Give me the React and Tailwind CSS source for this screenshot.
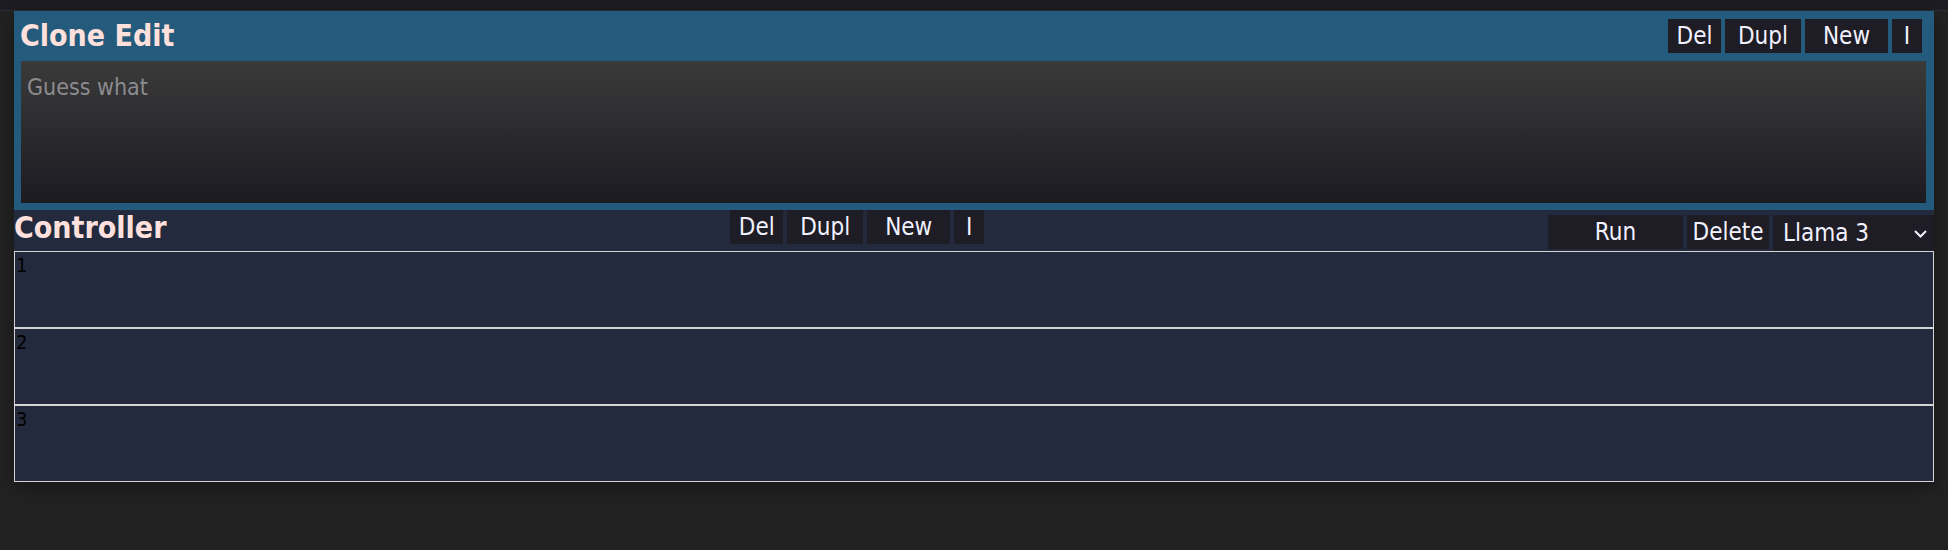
import React from 'react';

const font = { fontFamily: '"DejaVu Sans Condensed", "Liberation Sans", sans-serif' };

function ToolButton({ label, width }) {
  return (
    <button
      type="button"
      className={`${width} h-[34px] bg-[#1e1c24] text-[#f2f2ff] text-[24px] leading-none flex items-center justify-center`}
    >
      {label}
    </button>
  );
}

function EditButtons() {
  return (
    <div className="flex gap-[4px]">
      <ToolButton label="Del" width="w-[53px]" />
      <ToolButton label="Dupl" width="w-[76px]" />
      <ToolButton label="New" width="w-[83px]" />
      <ToolButton label="I" width="w-[30px]" />
    </div>
  );
}

const rows = ['1', '2', '3'];

export default function App() {
  return (
    <div className="min-h-screen bg-[#222222]" style={font}>
      {/* top strip */}
      <div className="h-[11px] bg-[#1d1c22] border-b border-[#2c2c31]" />

      <div className="mx-[14px] shadow-[0_6px_16px_rgba(0,0,0,0.35)]">
        {/* Clone Edit panel */}
        <section className="bg-[#245a7b] pb-[7px]">
          <div className="h-[50px] flex items-center justify-between pl-[6px] pr-[12px]">
            <h1 className="text-[30px] font-bold text-[#ffe0dc] leading-none">Clone Edit</h1>
            <EditButtons />
          </div>
          <div className="px-[7px] pr-[8px]">
            <textarea
              placeholder="Guess what"
              className="block w-full h-[142px] resize-none bg-gradient-to-b from-[#3a3a3a] to-[#1d1b22] px-[6px] py-[12px] text-[23px] leading-tight text-[#dddddd] placeholder:text-[#8c8b90] outline-none"
              style={font}
            />
          </div>
        </section>

        {/* Controller */}
        <section className="bg-[#242a3d]">
          <div className="h-[41px] flex items-start justify-between">
            <h2 className="text-[30px] font-bold text-[#ffe0dc] leading-[36px]">Controller</h2>
            <EditButtons />
            <div className="flex gap-[4px] mt-[5px]">
              <ToolButton label="Run" width="w-[135px]" />
              <ToolButton label="Delete" width="w-[82px]" />
              <div className="relative w-[161px] h-[36px]">
                <select
                  defaultValue="llama3"
                  className="appearance-none w-full h-full bg-[#1e1c24] text-[#f2f2ff] text-[24px] leading-none pl-[10px] outline-none"
                  style={font}
                >
                  <option value="llama3">Llama 3</option>
                  <option value="mistral">Mistral</option>
                </select>
                <svg
                  className="absolute right-[7px] top-[15px] pointer-events-none"
                  width="13"
                  height="8"
                  viewBox="0 0 13 8"
                  fill="none"
                  stroke="#f2f2ff"
                  strokeWidth="2"
                >
                  <path d="M1 1l5.5 5.5L12 1" />
                </svg>
              </div>
            </div>
          </div>

          <div>
            {rows.map((n) => (
              <div key={n} className="h-[77px] border border-[#d4d4d4] px-[1px]">
                <span className="text-[20px] leading-[26px] text-black">{n}</span>
              </div>
            ))}
          </div>
        </section>
      </div>
    </div>
  );
}
